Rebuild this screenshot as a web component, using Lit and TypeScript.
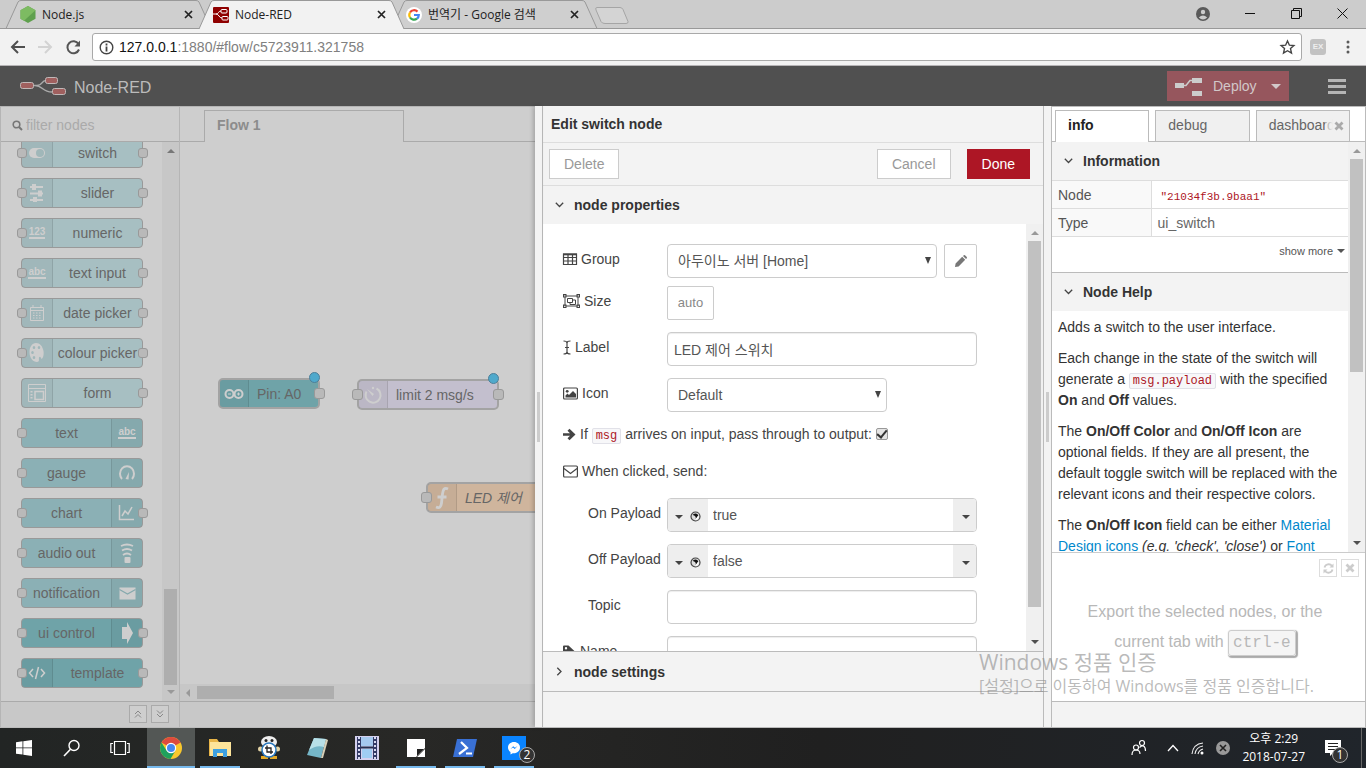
import { LitElement, html, svg, css, nothing } from "lit";
import { customElement, state } from "lit/decorators.js";
import { classMap } from "lit/directives/class-map.js";

const icon = (w: number, h: number, body: unknown, box = `0 0 ${w} ${h}`) =>
  html`<svg width=${w} height=${h} viewBox=${box} aria-hidden="true">${body}</svg>`;

const wordIcon = (text: string) => html`<span class="word">${text}</span>`;

const glyphs: Record<string, unknown> = {
  switch: icon(18, 12, svg`<rect x="1" y="1" width="16" height="10" rx="5" fill="currentColor"/><circle cx="12" cy="6" r="4" fill="#a0b7b9"/>`),
  slider: icon(16, 18, svg`<path d="M1 3h13M1 9.500h13M1 16h13" stroke="currentColor" stroke-width="2"/><path d="M3 0h4v6H3zM9 6.500h4v6H9zM4 13h4v5H4z" fill="currentColor"/>`),
  numeric: wordIcon("123"),
  abc: wordIcon("abc"),
  date: icon(16, 17, svg`<g fill="none" stroke="currentColor"><path d="M1.500 2.500h13v13h-13zM1 5.500h14" /><path d="M4 0v3M12 0v3"/><path d="M4 8h9M4 10.500h9M4 13h9" stroke-dasharray="1.500 1.500"/></g>`),
  palette: icon(16, 20, svg`<path fill="currentColor" fill-rule="evenodd" d="M7 0C3 0 .5 4 .5 9c0 6 3.500 10 7.500 10 3 0 1.500-3 2-4.500.7-1.700 2-.5 2.500 1.500C14.500 15 15 11 14.500 8 13.500 3 11 0 7 0zM5 3a1.300 1.500 0 110 3 1.300 1.500 0 010-3zm5 0a1.300 1.500 0 110 3 1.300 1.500 0 010-3zM3.500 8a1.300 1.500 0 110 3 1.300 1.500 0 010-3zM5 13a1.300 1.500 0 110 3 1.300 1.500 0 010-3z"/>`),
  form: icon(19, 19, svg`<g fill="none" stroke="currentColor"><path d="M.5.5h17v17H.500zM.5 4.500h17"/><path d="M7 7.500h8.500v8H7z" stroke-width="1.500"/><path d="M3.500 7v9" stroke-dasharray="1.500 1.500" stroke-width="2"/></g>`),
  gauge: icon(18, 18, svg`<path d="M4 15A7 7.500 0 1114 15" fill="none" stroke="currentColor" stroke-width="2"/><path d="M7.500 15l3.500-7-.5 7.500z" fill="currentColor"/>`),
  chart: icon(18, 18, svg`<path d="M1.500 1v14.500H16M4 12l3-5 3 3 4-7" fill="none" stroke="currentColor" stroke-width="1.500"/>`),
  audio: icon(14, 21, svg`<g fill="none" stroke="currentColor" stroke-width="1.800"><path d="M1 3q6-3 12 0M2 7.500q5-3 10 0M3 12q4-3 8 0"/></g><rect x="4.500" y="14" width="6" height="6" rx="1" fill="currentColor"/>`),
  mail: icon(17, 13, svg`<path d="M.5.500h16v12H.500z" fill="currentColor"/><path d="M.5 2.500l8 4.500 8-4.500" fill="none" stroke="#86a9ad" stroke-width="1.200"/>`),
  arrow: icon(13, 22, svg`<path d="M1 5h5V0l6 11-6 11v-5H1z" fill="currentColor"/>`),
  code: icon(18, 14, svg`<path d="M5 3L1.500 7 5 11M13 3l3.500 4-3.500 4M10.500 1l-3 12" fill="none" stroke="currentColor" stroke-width="1.500"/>`),
  arduino: icon(20, 12, svg`<g fill="none" stroke="currentColor" stroke-width="2"><circle cx="5.500" cy="6" r="4"/><circle cx="14.500" cy="6" r="4"/></g><path d="M4 6h3M13 6h3M14.500 4.500v3" stroke="currentColor"/>`),
  timer: icon(20, 20, svg`<path d="M13.500 3.500A7.500 7.500 0 113.500 6.500" fill="none" stroke="currentColor" stroke-width="2"/><path d="M4 4l7 5-1.500 2z" fill="currentColor"/><circle cx="10" cy="3" r="1.200" fill="currentColor"/>`),
  fn: icon(14, 24, svg`<path d="M13 3C9 1 8 4 7.500 8L6.500 17c-.5 4-2 5.500-5.500 4M2.500 11h9" fill="none" stroke="currentColor" stroke-width="2.800"/>`),
};

interface PaletteNode { name: string; glyph: string; tone: string; flip?: boolean; input?: boolean; output?: boolean; }

const paletteNodes: PaletteNode[] = [
  { name: "switch", glyph: "switch", tone: "light", input: true, output: true },
  { name: "slider", glyph: "slider", tone: "light", input: true, output: true },
  { name: "numeric", glyph: "numeric", tone: "light", input: true, output: true },
  { name: "text input", glyph: "abc", tone: "light", input: true, output: true },
  { name: "date picker", glyph: "date", tone: "light", input: true, output: true },
  { name: "colour picker", glyph: "palette", tone: "light", input: true, output: true },
  { name: "form", glyph: "form", tone: "light", output: true },
  { name: "text", glyph: "abc", tone: "mid", flip: true, input: true },
  { name: "gauge", glyph: "gauge", tone: "mid", flip: true, input: true },
  { name: "chart", glyph: "chart", tone: "mid", flip: true, input: true, output: true },
  { name: "audio out", glyph: "audio", tone: "mid", flip: true, input: true },
  { name: "notification", glyph: "mail", tone: "mid", flip: true, input: true },
  { name: "ui control", glyph: "arrow", tone: "deep", flip: true, input: true, output: true },
  { name: "template", glyph: "code", tone: "deep", input: true, output: true },
];

const fa = {
  search: icon(11, 11, svg`<circle cx="4.500" cy="4.500" r="3.300" fill="none" stroke="currentColor" stroke-width="1.600"/><path d="M7 7l3 3" stroke="currentColor" stroke-width="2"/>`),
  table: icon(14, 12, svg`<path d="M.5 1h13v10.500H.500zM.5 4.500h13M.5 8h13M5 1v10.500M9.500 1v10.500" fill="none" stroke="currentColor" stroke-width="1.200"/><path d="M0 .5h14v1.800H0z" fill="currentColor"/>`),
  group: icon(17, 14, svg`<g fill="none" stroke="currentColor"><path d="M2 2h13v10H2z"/><path d="M4.500 4.500h5v4h-5z"/><path d="M10 6h2.500v4.500H7V9"/></g><path d="M0 0h3.500v3.500H0zM13.500 0H17v3.500h-3.500zM0 10.500h3.500V14H0zM13.500 10.500H17V14h-3.500z" fill="currentColor"/><path d="M1.200 1.200h1.200v1.200H1.200zM14.700 1.200h1.200v1.200h-1.200zM1.200 11.700h1.200v1.200H1.200zM14.700 11.700h1.200v1.200h-1.200z" fill="#fff"/>`),
  cursor: icon(8, 15, svg`<path d="M.5 1C3 1 4 1.500 4 3c0-1.500 1-2 3.500-2M4 3v9M.5 14C3 14 4 13.500 4 12c0 1.500 1 2 3.500 2M2 7.500h4" fill="none" stroke="currentColor" stroke-width="1.200"/>`),
  image: icon(15, 13, svg`<rect x=".6" y="1" width="13.800" height="11" rx="1" fill="none" stroke="currentColor" stroke-width="1.200"/><circle cx="4.200" cy="4.300" r="1.400" fill="currentColor"/><path d="M2.500 10.500V8.500l2-2L6 8l4-4 3 3v3.500z" fill="currentColor"/>`),
  right: icon(13, 13, svg`<path d="M0 5.200h7L4.500 2.700 6.500.8l6 5.700-6 5.700-2-1.900L7 7.800H0z" fill="currentColor"/>`),
  envelope: icon(15, 13, svg`<rect x=".6" y="1" width="13.800" height="11" rx="1" fill="none" stroke="currentColor" stroke-width="1.200"/><path d="M1 3.500l6.500 5 6.500-5" fill="none" stroke="currentColor" stroke-width="1.200"/>`),
  tag: icon(13, 13, svg`<path fill="currentColor" fill-rule="evenodd" d="M0 1.500Q0 .5 1 .500h4.500L12.500 7 7 12.500 0 6zM3 2a1.200 1.200 0 100 2.400A1.200 1.200 0 003 2z"/>`),
  pencil: icon(13, 13, svg`<path d="M1 12l.6-3.600L8.200 1.800l3 3-6.600 6.600zM9 1l.8-.8q.7-.4 1.200.1l1.800 1.800q.4.600 0 1.100l-.8.800z" fill="currentColor"/>`),
  down: icon(9, 6, svg`<path d="M.8.800l3.700 3.700L8.200.800" fill="none" stroke="#444" stroke-width="1.300"/>`),
  next: icon(6, 9, svg`<path d="M.8.800l3.700 3.700L.8 8.200" fill="none" stroke="#444" stroke-width="1.300"/>`),
  dot: icon(11, 11, svg`<circle cx="5.500" cy="5.500" r="4.500" fill="#ddd" stroke="#444" stroke-width="1.200"/><path d="M8.300 4.500L5.500 8.700A3.200 3.200 0 002.600 4 3.200 3.200 0 018.300 4.500z" fill="#111"/><path d="M8.500 4.200A3.200 3.200 0 015 8.800z" fill="#fff"/>`),
  refresh: icon(11, 11, svg`<path d="M1.500 4.500A4.200 4.200 0 019 3M9.500 6.500A4.200 4.200 0 012 8" fill="none" stroke="currentColor" stroke-width="1.800"/><path d="M10.500.5v4h-4zM.5 10.500v-4h4z" fill="currentColor"/>`),
  cross: icon(10, 10, svg`<path d="M1.500 1.500l7 7M8.500 1.500l-7 7" stroke="currentColor" stroke-width="2.800"/>`),
};

const task: Record<string, unknown> = {
  windows: icon(16, 16, svg`<path d="M0 2.300L6.500 1.300v6.200H0zM7.300 1.200L16 0v7.500H7.300zM0 8.300h6.500v6.300L0 13.700zM7.300 8.300H16V16l-8.700-1.300z" fill="#fff"/>`),
  search: icon(18, 18, svg`<circle cx="11" cy="6.500" r="5" fill="none" stroke="#fff" stroke-width="1.400"/><path d="M7.500 10.200L1 17" stroke="#fff" stroke-width="1.600"/>`),
  view: icon(20, 16, svg`<path d="M4.500 1.500h11v13h-11zM3 3.500H.800v9H3M17 3.500h2.200v9H17" fill="none" stroke="#fff" stroke-width="1.200"/>`),
  chrome: icon(22, 22, svg`<circle cx="11" cy="11" r="11" fill="#f9c82d"/><path d="M11 11L1.500 5.500A11 11 0 0120.500 5.500z" fill="#dd4b3e"/><path d="M1.500 5.500A11 11 0 0010.500 22L15.500 13.500 6.500 13.500z" fill="#1fa15d"/><path d="M11 5.500h9.500" stroke="#dd4b3e" stroke-width="1"/><circle cx="11" cy="11" r="5.200" fill="#fff"/><circle cx="11" cy="11" r="4" fill="#4688f1"/>`),
  folder: icon(22, 20, svg`<path d="M0 1h8l2 3h12v14H0z" fill="#e8b548"/><path d="M1 4h21v14H1z" fill="#fde49a"/><path d="M4 19v-8h14v8h-4v-4H8v4z" fill="#3da0e0"/>`),
  capture: icon(22, 24, svg`<ellipse cx="11" cy="6" rx="8" ry="6" fill="#eee"/><circle cx="8" cy="4.500" r="1.500" fill="#222"/><circle cx="14" cy="4.500" r="1.500" fill="#222"/><path d="M3 20h7v3H3zM12 20h7v3h-7z" fill="#e5a823"/><circle cx="2.500" cy="13" r="2.500" fill="#e4d4a5"/><circle cx="19.500" cy="13" r="2.500" fill="#e4d4a5"/><circle cx="11" cy="14" r="7" fill="#fff" stroke="#2978bd" stroke-width="1.500"/><path d="M9 9.500v6.500H15M7 12h6v6" fill="none" stroke="#222" stroke-width="1.300"/>`),
  notepad: icon(23, 22, svg`<path d="M8 1l12 1-5 19L1 18z" fill="#75b6c8"/><path d="M8 1l12 1-2 8C12 8 8 10 3 13z" fill="#b8e0e8"/><path d="M20 2l2 1-5 18-2 0z" fill="#d8d0b8"/>`),
  film: icon(24, 24, svg`<path d="M0 0h24v24H0z" fill="#d4d0ee"/><path d="M2 1h4v22H2zM18 1h4v22h-4z" fill="#333a66"/><path d="M4 1v22M20 1v22" stroke="#d7daf0" stroke-width="2" stroke-dasharray="2 2"/><path d="M6 1h12v9H6z" fill="#a5c9ef"/><path d="M7 13h10v9H7z" fill="#9fcdf3"/><path d="M6 11.500h12" stroke="#26304f" stroke-width="2"/>`),
  note: icon(18, 18, svg`<path d="M0 0h18v9l-9 9H0z" fill="#fff"/><path d="M10 17v-7h7z" fill="#222"/><path d="M18 10v8h-8z" fill="#fff"/>`),
  shell: icon(24, 20, svg`<path d="M4 1h20l-4 18H0z" fill="#3970d4"/><path d="M8 4l6 6-8 6M13 15.500h6" fill="none" stroke="#fff" stroke-width="2.200"/>`),
  messenger: icon(24, 24, svg`<path d="M0 0h24v24H0z" fill="#0a84ff"/><path d="M12 6c-3.500 0-6 2.400-6 5.500 0 2 1 3.500 2.500 4.500v2.500l2.200-1.300C15 17.700 18 15 18 11.500 18 8.400 15.500 6 12 6z" fill="#fff"/><path d="M8.500 13l2.700-2.700 1.800 1.400 2.500-1.700-2.700 2.900-1.800-1.500z" fill="#0a84ff"/>`),
};

const favicons: Record<string, unknown> = {
  node: icon(16, 17, svg`<path d="M8 0l7.500 4.200v8.500L8 17 .5 12.700V4.200z" fill="#5fa04e"/><path d="M8 0l7.500 4.200L4 14.700.5 12.700V4.200z" fill="#7dbb62"/>`),
  red: icon(16, 16, svg`<rect width="16" height="16" rx="1" fill="#8f0000"/><g fill="none" stroke="#fff"><rect x="8" y="2.500" width="6" height="3.500" rx="1"/><rect x="9" y="9.500" width="6" height="3.500" rx="1"/><path d="M0 7h3c3 0 2-3 5-3M3 7c3 0 3 4 6 4"/></g>`),
  google: icon(16, 16, svg`<circle cx="8" cy="8" r="8" fill="#fff"/><g fill="none" stroke-width="2.200"><path d="M11.500 4.600A4.800 4.800 0 004 5.500" stroke="#ea4335"/><path d="M4 5.500a4.800 4.800 0 000 5" stroke="#fbbc05"/><path d="M4 10.500a4.800 4.800 0 007 1.200" stroke="#34a853"/><path d="M11 11.700A4.800 4.800 0 0012.800 8H8" stroke="#4285f4"/></g>`),
};

@customElement("app-root")
export class AppRoot extends LitElement {
  @state() private passThrough = true;

  static styles = css`
    :host { display: block; height: 100vh; overflow: hidden; position: relative; font: 14px/20px "Liberation Sans", "Noto Sans CJK KR", sans-serif; color: #333; background: #f3f3f3; }
    * { box-sizing: border-box; }
    button, input, select { font: inherit; margin: 0; outline: 0; }
    button { padding: 0; cursor: pointer; display: flex; align-items: center; justify-content: center; }
    svg { display: block; flex: none; overflow: visible; }
    a { color: #0088cc; text-decoration: none; }
    .page { display: flex; flex-direction: column; height: 100%; }

    .strip { display: flex; height: 29px; flex: none; background: #ccc; border-bottom: 1px solid #999; padding-left: 6px; font: 12px/18px "Open Sans", "Noto Sans CJK KR", sans-serif; color: #222; }
    .tab { position: relative; width: 205px; height: 29px; margin-right: -12px; display: flex; align-items: center; gap: 6px; padding: 0 18px 0 14px; }
    .tab .shape { position: absolute; inset: 0; width: 100%; height: 100%; fill: #cfcfcf; stroke: #999; }
    .tab.active { z-index: 1; }
    .tab.active .shape { fill: #f2f2f2; }
    .tab > :not(.shape) { position: relative; }
    .tab .name { flex: 1; }
    .tab button, .ctl button, .bar > button { border: 0; background: none; color: #222; }
    .newtab { margin: 7px 0 0 9px; align-self: flex-start; }
    .ctl { margin-left: auto; display: flex; align-items: center; height: 27px; padding-right: 18px; gap: 35px; }
    .bar { display: flex; align-items: center; flex: none; height: 37px; padding: 0 10px 0 9px; background: #f2f2f2; border-bottom: 1px solid #b6b4b6; gap: 12px; }
    .bar .nav { width: 16px; }
    .address { flex: 1; display: flex; align-items: center; gap: 5px; height: 28px; margin: 0 -4px 0 -1px; border: 1px solid #a9a9a9; border-radius: 3px; background: #fff; padding: 0 6px; font: 14px/20px "Liberation Sans", sans-serif; color: #808080; }
    .address .url { flex: 1; }
    .address b { font-weight: 400; color: #111; }
    .ex { font: bold 8px/16px "Liberation Sans", sans-serif; color: #eee; background: #c2c2c2; border-radius: 3px; width: 16px; text-align: center; margin-right: 2px; }

    .header { display: flex; align-items: center; flex: none; height: 40px; padding: 0 20px; background: #505050; color: #bbb; font-size: 16px; }
    .header .brand { margin-left: 8px; flex: 1; padding-top: 3px; }
    .deploy { height: 30px; width: 122px; border: 0; background: #96565d; color: #d2c8c9; font-size: 14px; justify-content: flex-start; padding: 0 8px; gap: 11px; }
    .deploy .tri { margin-left: auto; }
    .burger { border: 0; background: none; color: #b5b5b5; margin-left: 39px; }
    .tri { width: 0; height: 0; border: 5px solid transparent; border-top-color: currentColor; border-bottom: 0; }
    .tri.small { border-width: 4px; border-bottom: 0; }

    .main { flex: 1; min-height: 0; display: flex; border-bottom: 1px solid #bbb; }
    .palette { width: 180px; flex: none; display: flex; flex-direction: column; background: #cecece; border: 1px solid #b5b5b5; border-width: 1px 1px 0 1px; color: #666; }
    .filter { display: flex; align-items: center; height: 35px; flex: none; gap: 3px; padding: 2px 0 0 11px; border-bottom: 1px solid #aaa; color: #777; }
    .filter input { border: 0; background: none; width: 130px; padding: 0; }
    .filter input::placeholder { color: #aaa; opacity: 1; }
    .row { display: flex; flex: 1; min-height: 0; }
    .nodes { flex: 1; overflow: hidden; display: flex; flex-direction: column; justify-content: flex-end; padding: 0 19px 13px 20px; gap: 10px; }
    .foot { height: 26px; flex: none; border-top: 1px solid #aaa; background: #c8c8c8; display: flex; gap: 4px; align-items: flex-start; justify-content: flex-end; padding: 3px 10px; }
    .foot button { width: 18px; height: 18px; border: 1px solid #aaa; background: #cecece; color: #888; }

    .node { position: relative; display: flex; height: 30px; flex: none; border: 1px solid #999; border-radius: 4px; color: #666; }
    .node .pic { width: 31px; display: flex; align-items: center; justify-content: center; background: rgba(0, 0, 0, 0.04); border-right: 1px solid rgba(0, 0, 0, 0.1); color: #cecece; flex: none; }
    .node .text { flex: 1; text-align: center; line-height: 28px; white-space: nowrap; }
    .node.flip { flex-direction: row-reverse; }
    .node.flip .pic { border-right: 0; border-left: 1px solid rgba(0, 0, 0, 0.1); }
    .light { background: #a7bfc2; } .mid { background: #8bb0b5; } .deep { background: #6fa3a8; }
    .lilac { background: #c3bfce; } .sand { background: #cfb59d; }
    .port { position: absolute; top: 9px; width: 10px; height: 10px; border: 1px solid #999; border-radius: 3px; background: #b9b9b9; }
    .port.in { left: -5px; } .port.out { right: -6px; }
    .word { font: bold 10px/10px "Liberation Sans", sans-serif; border-bottom: 2px solid currentColor; }

    .space { flex: 1; min-width: 0; display: flex; flex-direction: column; background: #cecece; border-top: 1px solid #b5b5b5; }
    .flows { height: 35px; flex: none; display: flex; align-items: flex-end; border-bottom: 1px solid #aaa; padding-left: 24px; }
    .flow { width: 200px; height: 32px; margin-bottom: -1px; border: 1px solid #aaa; border-bottom: 0; background: #cecece; padding: 4px 12px; font-weight: bold; color: #8c8c8c; }
    .canvas { flex: 1; position: relative; overflow: hidden; }
    .node.placed { position: absolute; height: 31px; border: 2px solid #a3a3a3; border-radius: 5px; }
    .placed .pic { width: 29px; }
    .placed .text { text-align: left; padding-left: 8px; }
    .placed .port { top: 8px; width: 11px; height: 11px; }
    .placed .port.in { left: -7px; } .placed .port.out { right: -7px; }
    .changed { position: absolute; top: -8px; right: -2px; width: 11px; height: 11px; border-radius: 50%; background: #4fa9cc; border: 1px solid #4e7f99; }
    .p1 { left: 38px; top: 236px; width: 102px; }
    .p2 { left: 177px; top: 237px; width: 142px; }
    .p3 { left: 246px; top: 340px; width: 150px; font-style: italic; }

    .vbar { width: 17px; flex: none; background: #f0f0f0; display: flex; flex-direction: column; align-items: center; justify-content: space-between; padding: 7px 0; color: #505050; position: relative; }
    .vbar i, .hbar i { width: 0; height: 0; border: 4px solid transparent; }
    .vbar .up { border-bottom-color: #999; border-top: 0; } .vbar .dn { border-top-color: currentColor; border-bottom: 0; }
    .vbar .thumb { width: 13px; background: #c1c1c1; flex: none; }
    .vbar .fill { flex: 1; display: flex; flex-direction: column; padding: 6px 0; }
    .vbar.dim { background: #c7c7c7; color: #999; }
    .vbar.dim .up { border-bottom-color: #777; }
    .vbar.dim .thumb { background: #aeaeae; height: 96px; margin-top: auto; }
    .vbar.dim .fill { padding: 5px 0; }
    .vbar.form .thumb { height: 366px; }
    .vbar.side .thumb { height: 213px; }
    .hbar { height: 17px; flex: none; background: #c7c7c7; display: flex; align-items: center; gap: 7px; padding: 0 6px; }
    .hbar i { border-right-color: #999; border-left: 0; }
    .hbar .thumb { width: 137px; height: 13px; background: #aeaeae; }

    .grip { width: 7px; flex: none; display: flex; align-items: center; justify-content: center; background: #f3f3f3; }
    .grip::after { content: ""; width: 3px; height: 50px; background: #ccc; }
    .grip.lead { box-shadow: -2px 0 4px rgba(0, 0, 0, 0.2); z-index: 1; }
    .tray { width: 502px; flex: none; display: flex; flex-direction: column; background: #f3f3f3; border: 1px solid #bbb; border-width: 0 1px; }
    .tray h2 { margin: 0; font: bold 14px/36px "Liberation Sans", sans-serif; padding-left: 8px; border-bottom: 1px solid #ddd; }
    .actions { display: flex; align-items: center; height: 43px; padding: 0 13px 0 6px; gap: 16px; border-bottom: 1px solid #ddd; }
    .btn { height: 30px; padding: 0 14px; border: 1px solid #ccc; background: #fff; color: #999; }
    .btn.push { margin-right: auto; }
    .btn.primary { background: #ad1625; border-color: #ad1625; color: #fff; }
    .head { display: flex; align-items: center; width: 100%; height: 38px; flex: none; border: 0; background: #f3f3f3; font-weight: bold; color: #333; justify-content: flex-start; padding-left: 12px; gap: 10px; }
    .head svg { width: 9px; }
    .tray .head.closed { border-top: 1px solid #bbb; border-bottom: 1px solid #bbb; height: 41px; }
    .foot-space { height: 35px; flex: none; }
    form { flex: 1; overflow: hidden; padding: 20px 49px 0 20px; background: #fff; color: #444; }
    .field { display: flex; align-items: center; margin-bottom: 12px; height: 34px; }
    .field.tight { margin-bottom: 8px; }
    .field > label { width: 104px; flex: none; display: flex; align-items: center; gap: 4px; padding-bottom: 4px; }
    .field > label.deep-label { padding-left: 25px; background: none; }
    .line { display: flex; align-items: center; height: 20px; margin-bottom: 17px; gap: 4px; }
    .line input { appearance: none; width: 12px; height: 12px; border: 1px solid #999; border-radius: 2px; background: #e4e4e4; display: grid; place-items: center; }
    .line input:checked::after { content: ""; width: 4px; height: 8px; border: solid #333; border-width: 0 2px 2px 0; transform: rotate(40deg); margin-top: -2px; }
    .box, .pick select { height: 34px; border: 1px solid #ccc; border-radius: 4px; background: #fff; color: #555; flex: 1; min-width: 0; padding: 0 6px; }
    .box { box-shadow: inset 0 1px 1px rgba(0, 0, 0, 0.075); }
    .pick { position: relative; flex: 1; display: flex; }
    .pick.short { flex: none; width: 220px; }
    .pick select { appearance: none; padding: 0 10px; }
    .pick .tri { position: absolute; right: 6px; top: 13px; border-width: 7px 3px 0; color: #444; }
    .square { width: 33px; height: 34px; margin-left: 7px; border: 1px solid #ccc; border-radius: 2px; background: #fff; color: #777; }
    .auto { width: 47px; height: 34px; border: 1px solid #ccc; border-radius: 2px; background: #fff; color: #888; font-size: 13px; }
    .typed { flex: 1; height: 34px; display: flex; border: 1px solid #ccc; border-radius: 4px; overflow: hidden; background: #fff; color: #444; }
    .typed button { border: 0; background: #eee; gap: 7px; width: 40px; padding-top: 3px; color: #444; }
    .typed button:last-child { width: 23px; padding-left: 3px; }
    .typed input { flex: 1; min-width: 0; border: 0; padding: 0 5px; color: #555; background: none; }
    code { font: 12px/16px "Liberation Mono", monospace; color: #ad1625; background: #f7f7f9; border: 1px solid #e1e1e8; border-radius: 2px; padding: 0 3px; }

    .sidebar { flex: none; width: 315px; display: flex; flex-direction: column; border: 1px solid #bbb; border-bottom: 0; background: #fff; }
    .stabs { display: flex; height: 35px; flex: none; align-items: flex-end; gap: 6px; padding: 0 15px 0 3px; border-bottom: 1px solid #bbb; }
    .stabs button { position: relative; flex: 1; min-width: 0; overflow: hidden; height: 31px; border: 1px solid #bbb; border-bottom: 0; background: #f0f0f0; color: #666; justify-content: flex-start; padding: 0 0 2px 12px; }
    .stabs button.on { height: 32px; margin-bottom: -1px; padding-bottom: 3px; background: #fff; color: #222; font-weight: bold; }
    .fade { position: absolute; right: 0; top: 0; bottom: 0; width: 24px; display: flex; align-items: center; padding-left: 9px; background: linear-gradient(90deg, rgba(240, 240, 240, 0.4), #f0f0f0 8px); color: #aaa; }
    .info { flex: 1; overflow: hidden; min-width: 0; line-height: 21px; }
    table { width: 100%; border-collapse: collapse; color: #666; line-height: 20px; }
    th, td { height: 28px; border-top: 1px solid #ddd; border-bottom: 1px solid #ddd; padding: 0 6px; text-align: left; font-weight: 400; }
    th { width: 99px; background: #f9f9f9; border-right: 1px solid #ddd; color: #555; }
    .id { font: 11px/16px "Liberation Mono", monospace; color: #ad1625; padding-left: 3px; }
    .more { display: flex; justify-content: flex-end; align-items: center; height: 36px; padding: 0 3px 8px; border-bottom: 1px solid #bbb; font: 11px/16px "Liberation Sans", sans-serif; color: #555; }
    .more a { color: inherit; display: flex; align-items: center; gap: 4px; }
    .info p { margin: 0 6px 10px; }
    .info .help { padding-top: 6px; }
    .tips { height: 149px; flex: none; border-top: 1px solid #ccc; padding: 6px; color: #b8b8b8; font-size: 16px; line-height: 30px; text-align: center; }
    .tips .mini { display: flex; justify-content: flex-end; gap: 4px; }
    .tips .mini button { width: 18px; height: 18px; border: 1px solid #ddd; background: #fff; color: #ccc; }
    .tips p { margin: 20px 32px 0 25px; }
    kbd { font: 16px/24px "Liberation Mono", monospace; border: 1px solid #ccc; border-radius: 3px; padding: 3px 4px; background: #f5f5f5; box-shadow: 1px 1px 1px 1px #aaa; }
    .sidebar .foot { background: #f3f3f3; border-color: #bbb; }

    .taskbar { height: 40px; flex: none; display: flex; background: linear-gradient(90deg, #222524, #282826 30%, #202020 60%, #20252b); color: #fff; font: 12px/18px "Open Sans", "Noto Sans CJK KR", sans-serif; }
    .taskbar button { position: relative; width: 48px; border: 0; background: none; color: #fff; flex: none; }
    .taskbar button.app { width: 49px; }
    .taskbar .app.first { margin-left: 3px; background: #535755; width: 48px; }
    .run::after { content: ""; position: absolute; bottom: 0; left: 5px; right: 4px; height: 2px; background: #76b9ed; }
    .first.run::after { left: 0; right: 0; }
    .num { position: absolute; left: 30px; top: 19px; width: 16px; height: 16px; border: 1px solid #aaa; border-radius: 50%; background: #333; font: 12px/14px "Open Sans", sans-serif; text-align: center; }
    .status { margin-left: auto; display: flex; align-items: center; gap: 12px; padding-right: 4px; }
    .people { display: flex; margin-right: 8px; }
    .clock { text-align: center; }
    .status button { width: 32px; height: 40px; }
    .status .num { left: 15px; }
    .show { height: 40px; border-left: 1px solid #666; }
    .mark { position: absolute; left: 979px; bottom: 72px; font: 16px/20px "Open Sans", "Noto Sans CJK KR", sans-serif; color: rgba(140, 140, 140, 0.6); pointer-events: none; z-index: 3; }
    .mark strong { display: block; font-weight: 400; font-size: 21px; line-height: 28px; }
  `;

  private browserTab(name: string, fav: string, active = false) {
    return html`<div class=${classMap({ tab: true, active })}>
      <svg class="shape" viewBox="0 0 205 29" preserveAspectRatio="none"><path d=${active ? "M0 29L12 2Q13 .5 15 .500H190Q192 .5 193 2L205 29" : "M0 28.500L12 2Q13 .5 15 .500H190Q192 .5 193 2L205 28.500z"}></path></svg>
      ${favicons[fav]}<span class="name">${name}</span>
      <button aria-label="Close tab">${icon(9, 9, svg`<path d="M1 1l7 7M8 1L1 8" stroke="#222" stroke-width="1.700"/>`)}</button>
    </div>`;
  }

  private chrome() {
    return html`
      <div class="strip">
        ${this.browserTab("Node.js", "node")}${this.browserTab("Node-RED", "red", true)}${this.browserTab("번역기 - Google 검색", "google")}
        <div class="newtab">${icon(36, 17, svg`<path d="M3 .5h23q2 0 3 2l5 12q.5 2-2 2H11q-3 0-4-2L2 3Q1 .5 3 .500z" fill="#d4d4d4" stroke="#a5a5a5"/>`)}</div>
        <div class="ctl">
          <button aria-label="Profile">${icon(14, 14, svg`<circle cx="7" cy="7" r="7" fill="#5a5a5a"/><circle cx="7" cy="5" r="2.200" fill="#ccc"/><path d="M2.800 10.500q4.200-4 8.400 0-4.200 4-8.400 0z" fill="#ccc"/>`)}</button>
          <button aria-label="Minimize">${icon(11, 11, svg`<path d="M0 5.500h10" stroke="#111"/>`)}</button>
          <button aria-label="Restore">${icon(11, 11, svg`<path d="M.5 2.500h8v8h-8zM2.500 2.500v-2h8v8h-2" fill="none" stroke="#111"/>`)}</button>
          <button aria-label="Close">${icon(11, 11, svg`<path d="M.5.500l10 10M10.500.500l-10 10" stroke="#111"/>`)}</button>
        </div>
      </div>
      <div class="bar">
        <button class="nav" aria-label="Back">${icon(15, 14, svg`<path d="M8 1L2 7l6 6M2 7h13" fill="none" stroke="#4f4f4f" stroke-width="2"/>`)}</button>
        <button class="nav" aria-label="Forward">${icon(15, 14, svg`<path d="M7 1l6 6-6 6M13 7H0" fill="none" stroke="#d3d3d3" stroke-width="2"/>`)}</button>
        <button class="nav" aria-label="Reload">${icon(15, 15, svg`<path d="M12.500 4A6 6 0 1013 9.500" fill="none" stroke="#555" stroke-width="2"/><path d="M14 .5v6H8.500z" fill="#555"/>`)}</button>
        <div class="address">
          ${icon(15, 15, svg`<circle cx="7.500" cy="7.500" r="6.300" fill="none" stroke="#444" stroke-width="1.400"/><path d="M7.500 6.500v5M7.500 3.500v2" stroke="#444" stroke-width="1.800"/>`)}
          <span class="url"><b>127.0.0.1</b>:1880/#flow/c5723911.321758</span>
          ${icon(15, 14, svg`<path d="M7.500 1l1.900 4.200 4.500.4-3.400 3 1 4.500-4-2.400-4 2.400 1-4.500-3.400-3 4.500-.4z" fill="none" stroke="#444" stroke-width="1.400"/>`)}
        </div>
        <span class="ex">EX</span>
        <button class="nav" aria-label="Menu">${icon(4, 14, svg`<g fill="#5a5a5a"><circle cx="2" cy="2" r="1.500"/><circle cx="2" cy="7" r="1.500"/><circle cx="2" cy="12" r="1.500"/></g>`)}</button>
      </div>`;
  }

  private header() {
    return html`<div class="header">
      ${icon(46, 18, svg`<g fill="none" stroke="#aaa" stroke-width="1.500"><path d="M13 8.500h4c6 0 4-5 9-5M15 8.500c8 0 7 6.500 17 6.500"/></g><g fill="#a0605f" stroke="#c0b8b8"><rect x=".5" y="5.500" width="13" height="6" rx="2"/><rect x="25.500" y=".5" width="12" height="6" rx="2"/><rect x="32.500" y="11.500" width="13" height="6" rx="2"/></g>`)}
      <span class="brand">Node-RED</span>
      <button class="deploy">${icon(27, 19, svg`<path d="M0 6h9v5H0zM17 1h10v5H17zM17 14h10v5H17z" fill="#ccc"/><path d="M9 8.500h2l4-5h3" fill="none" stroke="#ccc" stroke-width="1.500"/>`)}Deploy<span class="tri"></span></button>
      <button class="burger" aria-label="Menu">${icon(18, 15, svg`<path d="M0 1.500h18M0 7.500h18M0 13.500h18" stroke="currentColor" stroke-width="3"/>`)}</button>
    </div>`;
  }

  private palette() {
    return html`<section class="palette">
      <label class="filter">${fa.search}<input aria-label="filter nodes" placeholder="filter nodes" /></label>
      <div class="row">
        <div class="nodes">${paletteNodes.map((n) => html`
          <div class="node ${n.tone} ${n.flip ? "flip" : ""}">
            <span class="pic">${glyphs[n.glyph]}</span><span class="text">${n.name}</span>
            ${n.input ? html`<span class="port in"></span>` : nothing}${n.output ? html`<span class="port out"></span>` : nothing}
          </div>`)}</div>
        <div class="vbar dim"><i class="up"></i><div class="fill"><div class="thumb"></div></div><i class="dn"></i></div>
      </div>
      <div class="foot">
        <button aria-label="Collapse all">${icon(8, 8, svg`<path d="M1 4l3-3 3 3M1 7.500l3-3 3 3" fill="none" stroke="currentColor"/>`)}</button>
        <button aria-label="Expand all">${icon(8, 8, svg`<path d="M1 .5l3 3 3-3M1 4l3 3 3-3" fill="none" stroke="currentColor"/>`)}</button>
      </div>
    </section>`;
  }

  private workspace() {
    return html`<section class="space">
      <div class="flows"><div class="flow">Flow 1</div></div>
      <div class="canvas">
        <div class="node placed deep p1"><span class="pic">${glyphs.arduino}</span><span class="text">Pin: A0</span><span class="port out"></span><span class="changed"></span></div>
        <div class="node placed lilac p2"><span class="pic">${glyphs.timer}</span><span class="text">limit 2 msg/s</span><span class="port in"></span><span class="port out"></span><span class="changed"></span></div>
        <div class="node placed sand p3"><span class="pic">${glyphs.fn}</span><span class="text">LED 제어</span><span class="port in"></span></div>
      </div>
      <div class="hbar"><i></i><div class="thumb"></div></div>
      <div class="foot"></div>
    </section>`;
  }

  private payload(id: string, label: string, value: string) {
    return html`<div class="field"><label class="deep-label" for=${id}>${label}</label>
      <div class="typed"><button type="button" aria-label="Type"><span class="tri small"></span>${fa.dot}</button>
      <input id=${id} .value=${value} /><button type="button" aria-label="Options"><span class="tri small"></span></button></div></div>`;
  }

  private tray() {
    return html`<section class="tray">
      <h2>Edit switch node</h2>
      <div class="actions"><button class="btn push">Delete</button><button class="btn">Cancel</button><button class="btn primary">Done</button></div>
      <button class="head">${fa.down}node properties</button>
      <div class="row">
        <form>
          <div class="field tight"><label for="group">${fa.table}Group</label>
            <div class="pick"><select id="group"><option>아두이노 서버 [Home]</option></select><span class="tri"></span></div>
            <button type="button" class="square" aria-label="Edit group">${fa.pencil}</button></div>
          <div class="field"><label for="size">${fa.group}Size</label><button type="button" id="size" class="auto">auto</button></div>
          <div class="field"><label for="label">${fa.cursor}Label</label><input class="box" id="label" .value=${"LED 제어 스위치"} /></div>
          <div class="field"><label for="icon">${fa.image}Icon</label>
            <div class="pick short"><select id="icon"><option>Default</option></select><span class="tri"></span></div></div>
          <div class="line">${fa.right}<label for="pass">If <code>msg</code> arrives on input, pass through to output:</label>
            <input id="pass" type="checkbox" .checked=${this.passThrough} @change=${(e: Event) => (this.passThrough = (e.target as HTMLInputElement).checked)} /></div>
          <div class="line">${fa.envelope}<span>When clicked, send:</span></div>
          ${this.payload("on", "On Payload", "true")}${this.payload("off", "Off Payload", "false")}
          <div class="field"><label class="deep-label" for="topic">Topic</label><input class="box" id="topic" /></div>
          <div class="field"><label for="name">${fa.tag}Name</label><input class="box" id="name" /></div>
        </form>
        <div class="vbar form"><i class="up"></i><div class="fill"><div class="thumb"></div></div><i class="dn"></i></div>
      </div>
      <button class="head closed">${fa.next}node settings</button>
      <div class="foot-space"></div>
    </section>`;
  }

  private sidebar() {
    return html`<section class="sidebar">
      <div class="stabs"><button class="on">info</button><button>debug</button><button>dashboard<span class="fade">${fa.cross}</span></button></div>
      <div class="row">
        <div class="info">
          <button class="head">${fa.down}Information</button>
          <table><tr><th scope="row">Node</th><td><span class="id">"21034f3b.9baa1"</span></td></tr><tr><th scope="row">Type</th><td>ui_switch</td></tr></table>
          <div class="more"><a href="#more">show more <span class="tri small"></span></a></div>
          <button class="head">${fa.down}Node Help</button>
          <div class="help">
            <p>Adds a switch to the user interface.</p>
            <p>Each change in the state of the switch will generate a <code>msg.payload</code> with the specified <b>On</b> and <b>Off</b> values.</p>
            <p>The <b>On/Off Color</b> and <b>On/Off Icon</b> are optional fields. If they are all present, the default toggle switch will be replaced with the relevant icons and their respective colors.</p>
            <p>The <b>On/Off Icon</b> field can be either <a href="#material">Material Design icons</a> <i>(e.g. 'check', 'close')</i> or <a href="#font">Font</a></p>
          </div>
        </div>
        <div class="vbar side"><i class="up"></i><div class="fill"><div class="thumb"></div></div><i class="dn"></i></div>
      </div>
      <div class="tips">
        <div class="mini"><button aria-label="Next tip">${fa.refresh}</button><button aria-label="Close tips">${fa.cross}</button></div>
        <p>Export the selected nodes, or the current tab with <kbd>ctrl-e</kbd></p>
      </div>
      <div class="foot"></div>
    </section>`;
  }

  private taskbar() {
    const running = ["chrome", "folder", "note", "shell", "messenger"];
    return html`<div class="taskbar">
      ${["windows", "search", "view"].map((n) => html`<button aria-label=${n}>${task[n]}</button>`)}
      ${["chrome", "folder", "capture", "notepad", "film", "note", "shell", "messenger"].map((n) => html`
        <button aria-label=${n} class=${classMap({ app: true, first: n === "chrome", run: running.includes(n) })}>${task[n]}${n === "messenger" ? html`<span class="num">2</span>` : nothing}</button>`)}
      <div class="status">
        <span class="people">${icon(16, 16, svg`<g fill="none" stroke="#fff" stroke-width="1.200"><circle cx="5" cy="7.500" r="2.500"/><path d="M1 15q0-5 4-5t4 4"/><circle cx="11" cy="3" r="2.500"/><path d="M8.500 7.500q2-2 4-1.500 2 1 2 5"/></g>`)}</span>
        ${icon(12, 8, svg`<path d="M1 7l5-5.500L11 7" fill="none" stroke="#fff" stroke-width="1.300"/>`)}
        ${icon(13, 13, svg`<g fill="none" stroke="#eee" stroke-width="1.100"><path d="M1 12Q2 2 12 1M4 12Q5 5 12 4M7 12Q8 8 12 7"/></g><circle cx="11" cy="11" r="1.500" fill="#fff"/>`)}
        ${icon(14, 14, svg`<circle cx="7" cy="7" r="7" fill="#999"/><path d="M4 4l6 6M10 4l-6 6" stroke="#222" stroke-width="1.600"/>`)}
        <div class="clock">오후 2:29<br />2018-07-27</div>
        <button aria-label="Notifications">${icon(16, 16, svg`<path d="M0 0h16v13H8l-3 3v-3H0z" fill="#fff"/><path d="M3 3.500h10M3 6.500h10M3 9.500h7" stroke="#222"/>`)}<span class="num">1</span></button>
        <span class="show"></span>
      </div>
    </div>`;
  }

  render() {
    return html`<div class="page">
      ${this.chrome()}${this.header()}
      <div class="main">${this.palette()}${this.workspace()}<div class="grip lead"></div>${this.tray()}<div class="grip"></div>${this.sidebar()}</div>
      ${this.taskbar()}
      <div class="mark"><strong>Windows 정품 인증</strong>[설정]으로 이동하여 Windows를 정품 인증합니다.</div>
    </div>`;
  }
}
